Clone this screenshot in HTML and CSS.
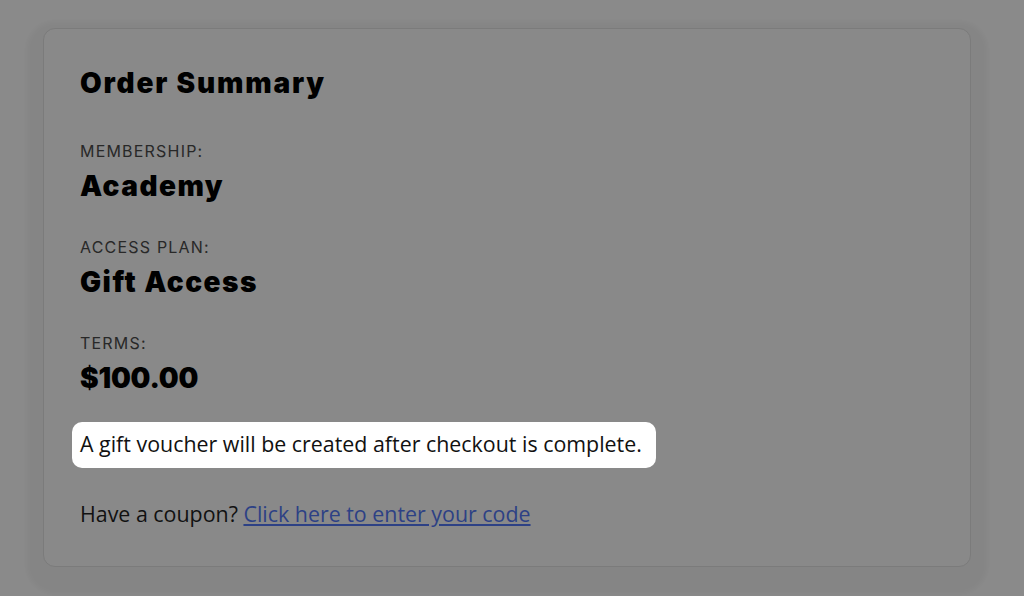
FILE: index.html
```html
<!DOCTYPE html>
<html lang="en">
<head>
<meta charset="utf-8">
<title>Order Summary</title>
<link rel="stylesheet" href="styles.css">
</head>
<body>
  <main class="page">
    <section class="card">
      <h2 class="title">Order Summary</h2>
      <div class="fields">
        <div class="field">
          <div class="label">MEMBERSHIP:</div>
          <div class="value">Academy</div>
        </div>
        <div class="field">
          <div class="label">ACCESS PLAN:</div>
          <div class="value">Gift Access</div>
        </div>
        <div class="field">
          <div class="label">TERMS:</div>
          <div class="value value--price">$100.00</div>
        </div>
      </div>
      <div class="notice">A gift voucher will be created after checkout is complete.</div>
      <p class="coupon">Have a coupon? <a href="#" class="coupon-link">Click here to enter your code</a></p>
    </section>
  </main>
</body>
</html>
```

FILE: styles.css
```css
html, body {
  margin: 0;
  padding: 0;
  background: #8a8a8a;
}

body {
  width: 1024px;
  height: 596px;
  overflow: hidden;
  font-family: "Open Sans", "Liberation Sans", sans-serif;
  color: #000;
}

.page {
  padding: 28px 53px 0 43px;
}

.card {
  width: 928px;
  height: 539px;
  box-sizing: border-box;
  border: 1px solid #7b7b7b;
  border-radius: 12px;
  background: #898989;
  box-shadow: 0 10px 4px 16px rgba(0, 0, 0, 0.035);
  padding: 36px 36px 0 36px;
}

.title {
  margin: 0 0 40px 0;
  font-family: Inter, "Liberation Sans", sans-serif;
  font-weight: 900;
  font-size: 28px;
  line-height: 36px;
  letter-spacing: 1.8px;
}

.fields {
  display: flex;
  flex-direction: column;
  gap: 34px;
}

.label {
  font-family: Inter, "Liberation Sans", sans-serif;
  font-weight: 400;
  font-size: 16px;
  line-height: 20px;
  letter-spacing: 1.2px;
  color: #282828;
}

.value {
  margin-top: 8px;
  font-family: Inter, "Liberation Sans", sans-serif;
  font-weight: 900;
  font-size: 28px;
  line-height: 34px;
  letter-spacing: 1.5px;
}

.value--price {
  letter-spacing: -0.2px;
}

.notice {
  display: inline-block;
  margin: 27px 0 0 -8.5px;
  padding: 7px 14px 9px 8.5px;
  background: #fff;
  border-radius: 10px;
  font-size: 21.4px;
  line-height: 30px;
  color: #111;
}

.coupon {
  margin: 31px 0 0 0;
  font-size: 21.4px;
  line-height: 30px;
  color: #111;
}

.coupon-link {
  color: #2d4185;
  text-decoration: underline;
}
```
